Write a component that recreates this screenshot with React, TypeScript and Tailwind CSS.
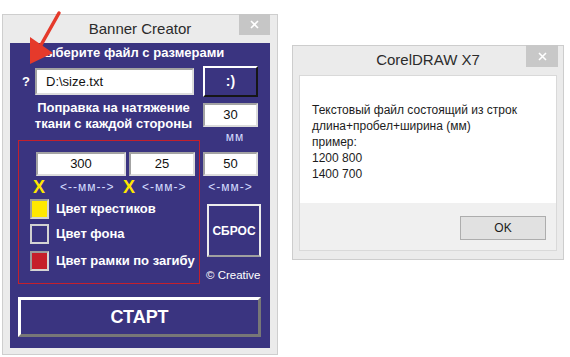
const sans = "font-['Liberation_Sans','Arial',sans-serif]";

function CloseX() {
  return (
    <svg width="9" height="9" viewBox="0 0 9 9">
      <path d="M1 1 L8 8 M8 1 L1 8" stroke="white" strokeWidth="1.6" />
    </svg>
  );
}

function Field({ value, w, h, align = 'center' }: { value: string; w: string; h: string; align?: string }) {
  return (
    <div
      className={`${w} ${h} bg-white border-2 border-[#a3a3a3] border-b-[#dcdcdc] border-r-[#dcdcdc] flex items-center text-[13px] text-[#111] ${
        align === 'left' ? 'justify-start pl-[9px]' : 'justify-center'
      }`}
    >
      {value}
    </div>
  );
}

function Swatch({ color, label }: { color: string; label: string }) {
  return (
    <div className="flex items-center pl-[11px]">
      <div className={`w-[19px] h-[20px] border-2 border-[#9c9c9c] border-b-[#d4d4d4] border-r-[#d4d4d4] ${color}`} />
      <span className="ml-[7px] text-[13px] leading-[16px] font-bold text-white">{label}</span>
    </div>
  );
}

function BannerCreator() {
  return (
    <div className="w-[276px] h-[341px] shrink-0 border border-[#cecece] bg-[#ebebeb] flex flex-col">
      <div className="relative h-[28px] flex items-center justify-center text-[15px] text-[#2b2b2b]">
        Banner Creator
        <div className="absolute right-[7px] top-[-1px] w-[31px] h-[21px] bg-[#c6c6c6] flex items-center justify-center">
          <CloseX />
        </div>
      </div>

      <div className="ml-[7px] w-[260px] h-[305px] bg-[#3a3480] flex flex-col">
        <div className="pl-[25px] pt-[2px] text-[13px] leading-[16px] font-bold text-white">Выберите файл с размерами</div>

        <div className="mt-[5px] h-[31px] flex items-center pl-[12px]">
          <span className="w-[13px] text-[13px] font-bold text-white">?</span>
          <Field value="D:\size.txt" w="w-[159px]" h="h-[27px]" align="left" />
          <button className="ml-[9px] w-[55px] h-[31px] bg-[#3a3480] border-2 border-t-white border-l-white border-b-[#161616] border-r-[#161616] text-[14px] font-bold text-white">
            :)
          </button>
        </div>

        <div className="mt-[3px] flex pl-[8px]">
          <div className="w-[182px] flex flex-col">
            <div className="pl-[9px] text-center text-[13px] leading-[16px] font-bold text-white">
              Поправка на натяжение
              <br />
              ткани с каждой стороны
            </div>
            <div className="mt-[8px] h-[144px] border border-[#c4202c] flex flex-col">
              <div className="pt-[11px] pl-[17px] flex">
                <Field value="300" w="w-[90px]" h="h-[24px]" />
                <div className="ml-[3px]">
                  <Field value="25" w="w-[66px]" h="h-[24px]" />
                </div>
              </div>
              <div className="mt-[3px] h-[16px] flex items-center pl-[14px]">
                <span className="w-[27px] text-[18px] leading-[16px] font-bold text-[#ffe600]">X</span>
                <span className="w-[63px] text-[12px] tracking-[1px] text-[#d4dcff]">&lt;--мм--&gt;</span>
                <span className="w-[19px] text-[18px] leading-[16px] font-bold text-[#ffe600]">X</span>
                <span className="text-[12px] tracking-[1px] text-[#d4dcff]">&lt;-мм-&gt;</span>
              </div>
              <div className="mt-[4px]">
                <Swatch color="bg-[#ffe800]" label="Цвет крестиков" />
              </div>
              <div className="mt-[5px]">
                <Swatch color="bg-[#3a3480] border-[#d0d0d0]" label="Цвет фона" />
              </div>
              <div className="mt-[7px]">
                <Swatch color="bg-[#c61f2a]" label="Цвет рамки по загибу" />
              </div>
            </div>
          </div>

          <div className="ml-[3px] w-[58px] flex flex-col">
            <div className="mt-[3px]">
              <Field value="30" w="w-[55px]" h="h-[24px]" />
            </div>
            <div className="mt-[3px] pl-[9px] w-[55px] text-center text-[12px] tracking-[1px] leading-[14px] text-[#d4dcff]">мм</div>
            <div className="mt-[8px]">
              <Field value="50" w="w-[55px]" h="h-[24px]" />
            </div>
            <div className="mt-[4px] w-[55px] text-center text-[12px] tracking-[1px] leading-[14px] text-[#d4dcff]">&lt;-мм-&gt;</div>
            <button className="mt-[10px] ml-[4px] w-[54px] h-[53px] bg-[#3a3480] border-2 border-[#ececec] border-b-[#a0a0a0] text-[12px] font-bold text-white">
              СБРОС
            </button>
            <div className="mt-[11px] ml-[3px] text-[11.5px] leading-[14px] text-white whitespace-nowrap">© Creative</div>
          </div>
        </div>

        <button className="mt-[13px] ml-[8px] w-[243px] h-[40px] bg-[#3a3480] border-[3px] border-t-white border-l-white border-b-[#777] border-r-[#777] text-[18px] font-bold text-white">
          СТАРТ
        </button>
      </div>
    </div>
  );
}

function CorelDialog() {
  return (
    <div className="ml-[14px] mt-[31px] w-[272px] h-[215px] shrink-0 border border-[#cdcdcd] bg-[#ebebeb] flex flex-col">
      <div className="relative h-[29px] flex items-center justify-center text-[15px] text-[#2b2b2b]">
        CorelDRAW X7
        <div className="absolute right-[5px] top-[-1px] w-[32px] h-[22px] bg-[#c8c8c8] flex items-center justify-center">
          <CloseX />
        </div>
      </div>
      <div className="ml-[6px] w-[258px] h-[176px] border border-[#d9d9d9] flex flex-col">
        <div className="h-[127px] bg-white pl-[12px] pt-[26px] text-[12px] leading-[16px] text-[#1c1c1c]">
          <div>Текстовый файл состоящий из строк</div>
          <div>длина+пробел+ширина (мм)</div>
          <div>пример:</div>
          <div>1200 800</div>
          <div>1400 700</div>
        </div>
        <div className="flex-1 bg-[#f0f0f0] flex justify-end items-start pt-[13px] pr-[10px]">
          <button className="w-[86px] h-[24px] bg-[#e1e1e1] border border-[#adadad] text-[12px] text-[#1c1c1c]">OK</button>
        </div>
      </div>
    </div>
  );
}

export default function App() {
  return (
    <div className={`relative w-[570px] h-[357px] bg-white overflow-hidden flex items-start pl-[2px] pt-[14px] ${sans}`}>
      <BannerCreator />
      <CorelDialog />
      {/* red pointer drawn over the first window */}
      <svg className="absolute left-0 top-0 pointer-events-none" width="80" height="80" viewBox="0 0 80 80">
        <line x1="59" y1="13" x2="41" y2="45" stroke="#e53a2b" strokeWidth="3.5" strokeLinecap="round" />
        <polygon points="30,64 30,37 53,53" fill="#e53a2b" />
      </svg>
    </div>
  );
}
